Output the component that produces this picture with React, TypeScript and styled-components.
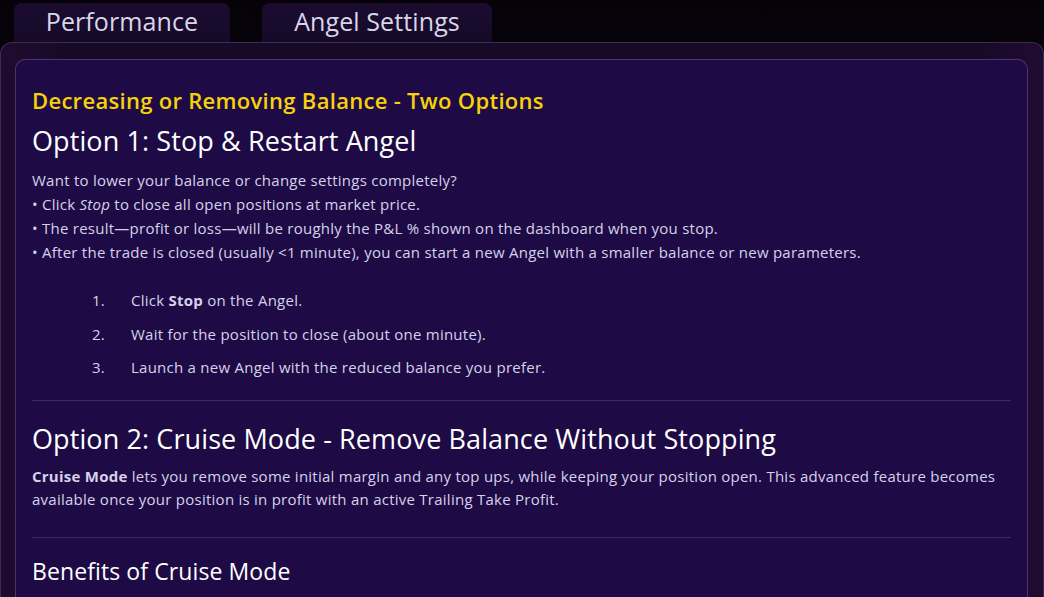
import React from "react";
import styled, { createGlobalStyle } from "styled-components";

const Global = createGlobalStyle`
  html, body { margin: 0; padding: 0; }
  body {
    width: 1044px;
    height: 597px;
    overflow: hidden;
    background: linear-gradient(180deg, #050208 0%, #0c0614 40%, #150a20 100%);
    font-family: "Open Sans", "Noto Sans", sans-serif;
  }
`;

const Page = styled.div`
  width: 1044px;
  height: 597px;
  display: flex;
  flex-direction: column;
  padding-top: 3px;
  box-sizing: border-box;
`;

const TabBar = styled.div`
  display: flex;
  gap: 32px;
  padding-left: 14px;
  height: 39px;
`;

const Tab = styled.div<{ $w: number }>`
  width: ${(p) => p.$w}px;
  height: 39px;
  box-sizing: border-box;
  border-radius: 8px 8px 0 0;
  background: linear-gradient(180deg, #1b0c30 0%, #170a28 100%);
  color: #d9d6ea;
  font-size: 25px;
  letter-spacing: 0.1px;
  display: flex;
  align-items: center;
  justify-content: center;
  padding-bottom: 4px;
`;

const Outer = styled.div`
  flex: 1;
  box-sizing: border-box;
  border: 1px solid #3b2c52;
  border-bottom: none;
  border-radius: 12px 12px 0 0;
  background: linear-gradient(90deg, #200b30 0%, #170a28 6%, #170a28 94%, #200b30 100%);
  padding: 16px 15px 0 14px;
  overflow: hidden;
`;

const Card = styled.div`
  box-sizing: border-box;
  height: 100%;
  border: 1px solid #47376a;
  border-bottom: none;
  border-radius: 10px 10px 0 0;
  background: #1e0b45;
  padding: 26px 16px 0 16px;
  color: #d6d1ea;
`;

const Kicker = styled.div`
  color: #f7d10a;
  font-size: 22px;
  letter-spacing: 0.3px;
  line-height: 28px;
  font-weight: 600;
`;

const H2 = styled.h2<{ $top?: number }>`
  margin: ${(p) => p.$top ?? 11}px 0 0 0;
  color: #ffffff;
  font-size: 27px;
  letter-spacing: 0.1px;
  line-height: 32px;
  font-weight: 500;
`;

const Para = styled.p<{ $top?: number; $lh?: number }>`
  margin: ${(p) => p.$top ?? 11}px 0 0 0;
  font-size: 15px;
  letter-spacing: 0.25px;
  line-height: ${(p) => p.$lh ?? 24}px;
`;

const List = styled.ol`
  margin: 24px 0 0 0;
  padding: 0 0 0 60px;
  list-style: none;
  display: flex;
  flex-direction: column;
  gap: 9.5px;
`;

const Item = styled.li`
  display: flex;
  font-size: 15px;
  letter-spacing: 0.25px;
  line-height: 24px;
`;

const Num = styled.span`
  width: 39px;
`;

const Divider = styled.hr<{ $top: number }>`
  border: none;
  border-top: 1px solid #3a2a60;
  margin: ${(p) => p.$top}px 0 0 0;
`;

const H3 = styled.h3`
  margin: 19px 0 0 0;
  color: #ffffff;
  font-size: 23px;
  letter-spacing: 0.1px;
  line-height: 28px;
  font-weight: 500;
`;

export default function App() {
  return (
    <>
      <Global />
      <Page>
        <TabBar>
          <Tab $w={216}>Performance</Tab>
          <Tab $w={230}>Angel Settings</Tab>
        </TabBar>
        <Outer>
          <Card>
            <Kicker>Decreasing or Removing Balance - Two Options</Kicker>
            <H2>Option 1: Stop &amp; Restart Angel</H2>
            <Para>
              Want to lower your balance or change settings completely?
              <br />• Click <em>Stop</em> to close all open positions at market price.
              <br />• The result—profit or loss—will be roughly the P&amp;L % shown on the dashboard when you stop.
              <br />• After the trade is closed (usually &lt;1 minute), you can start a new Angel with a smaller balance or new parameters.
            </Para>
            <List>
              <Item><Num>1.</Num><span>Click <b>Stop</b> on the Angel.</span></Item>
              <Item><Num>2.</Num><span>Wait for the position to close (about one minute).</span></Item>
              <Item><Num>3.</Num><span>Launch a new Angel with the reduced balance you prefer.</span></Item>
            </List>
            <Divider $top={21} />
            <H2 $top={22}>Option 2: Cruise Mode - Remove Balance Without Stopping</H2>
            <Para $top={10} $lh={23}>
              <b>Cruise Mode</b> lets you remove some initial margin and any top ups, while keeping your position open. This advanced feature becomes available once your position is in profit with an active Trailing Take Profit.
            </Para>
            <Divider $top={26} />
            <H3>Benefits of Cruise Mode</H3>
          </Card>
        </Outer>
      </Page>
    </>
  );
}
